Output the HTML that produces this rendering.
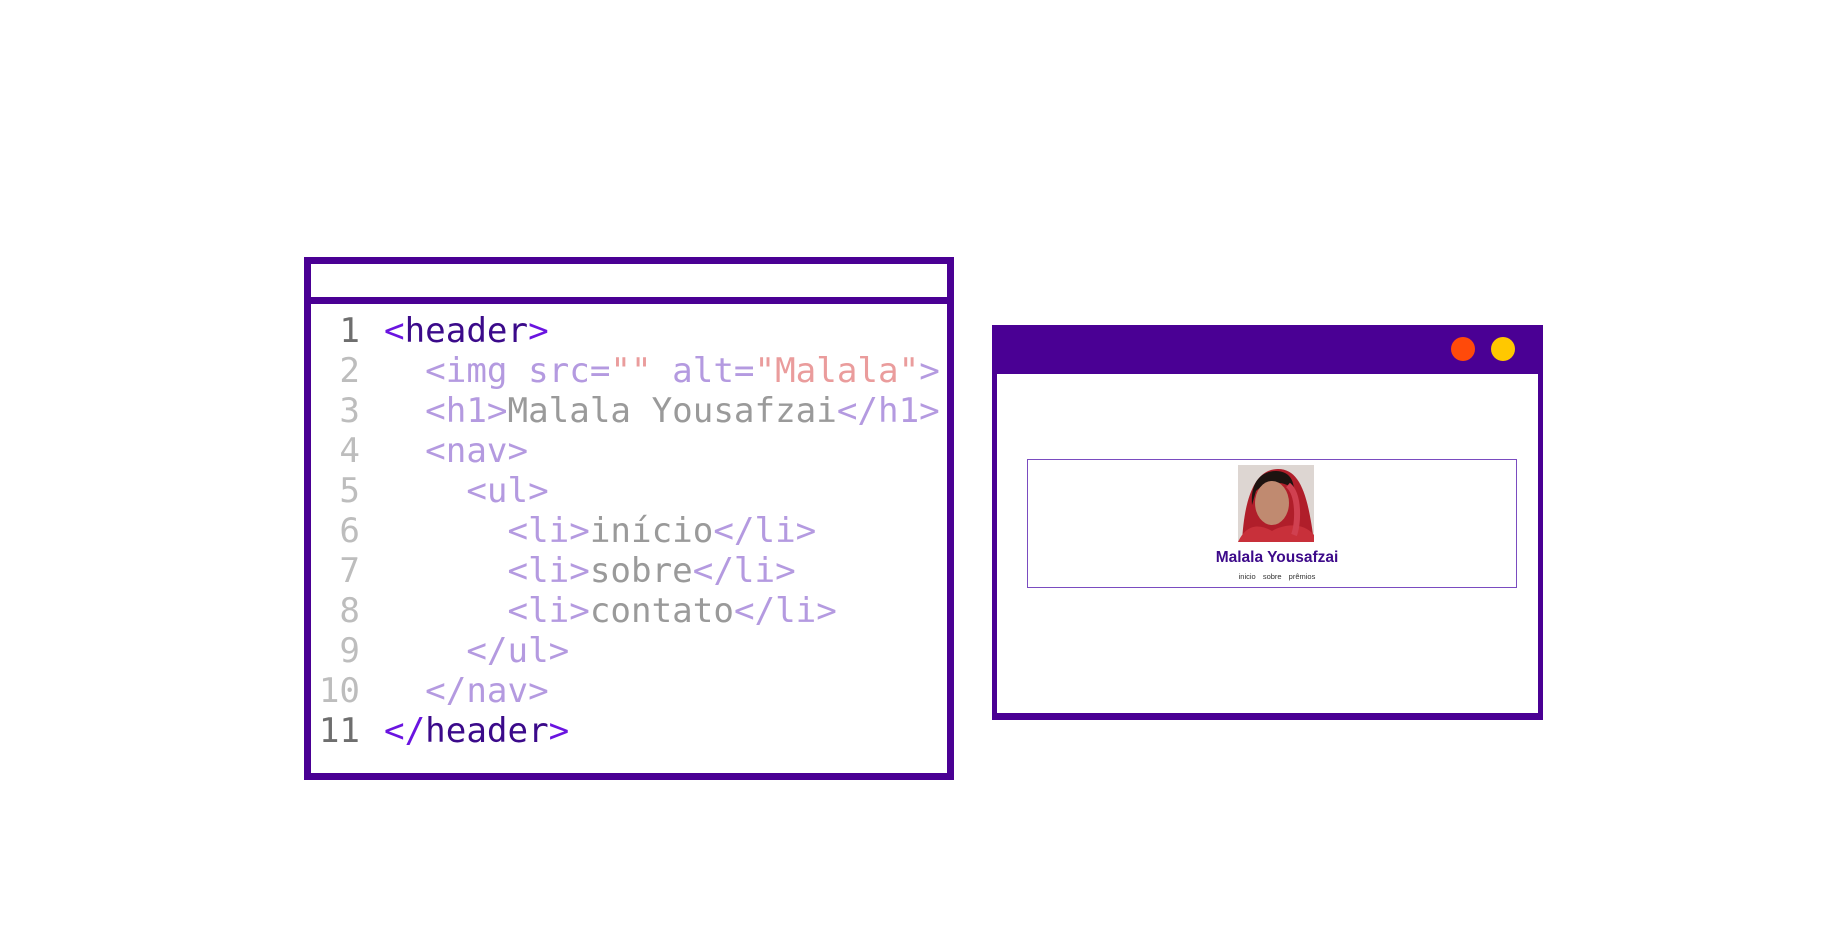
<!DOCTYPE html>
<html><head><meta charset="utf-8"><style>
html,body{margin:0;padding:0;background:#fff;width:1845px;height:943px;overflow:hidden;position:relative}
.code{position:absolute;left:304px;top:257px;width:636px;height:509px;border:7px solid #4a0094;}
.bar{position:absolute;left:0;top:0;width:100%;height:33px;border-bottom:7px solid #4a0094}
.lines{position:absolute;left:0;top:47px;font-family:"DejaVu Sans Mono","Liberation Mono",monospace;font-size:34.2px;line-height:40px;white-space:pre}
.n{display:inline-block;width:49px;text-align:right;color:#bdbdbd;margin-right:24px}
.n.d{color:#6e6e6e}
.p{color:#6a14e0}.h{color:#3b0a8a}.l{color:#b49ae0}.t{color:#9a9a9a}.v{color:#ea9c9c}
.prev{position:absolute;left:992px;top:325px;width:541px;height:388px;border:5px solid #4a0094;border-top:none;border-bottom:7px solid #4a0094}
.ph{position:absolute;left:-5px;top:0;width:551px;height:49px;background:#4a0094}
.dot{position:absolute;top:337px;width:24px;height:24px;border-radius:50%}
.card{position:absolute;left:1027px;top:459px;width:488px;height:127px;border:1.5px solid #7a4cc0}
.photo{position:absolute;left:1238px;top:465px;width:76px;height:77px;background:#ddd6d2;overflow:hidden}
.name{position:absolute;left:1030px;width:494px;top:549px;text-align:center;font:bold 15.5px "Liberation Sans",sans-serif;color:#3d0a8a}
.nav{position:absolute;left:1030px;width:494px;top:572px;text-align:center;font:7.5px "Liberation Sans",sans-serif;color:#333;word-spacing:5px}
</style></head><body>
<div class="code"><div class="bar"></div>
<div class="lines"><span class="n d">1</span><span class="p">&lt;</span><span class="h">header</span><span class="p">&gt;</span>
<span class="n">2</span>  <span class="l">&lt;img src=</span><span class="v">""</span><span class="l"> alt=</span><span class="v">"Malala"</span><span class="l">&gt;</span>
<span class="n">3</span>  <span class="l">&lt;h1&gt;</span><span class="t">Malala Yousafzai</span><span class="l">&lt;/h1&gt;</span>
<span class="n">4</span>  <span class="l">&lt;nav&gt;</span>
<span class="n">5</span>    <span class="l">&lt;ul&gt;</span>
<span class="n">6</span>      <span class="l">&lt;li&gt;</span><span class="t">início</span><span class="l">&lt;/li&gt;</span>
<span class="n">7</span>      <span class="l">&lt;li&gt;</span><span class="t">sobre</span><span class="l">&lt;/li&gt;</span>
<span class="n">8</span>      <span class="l">&lt;li&gt;</span><span class="t">contato</span><span class="l">&lt;/li&gt;</span>
<span class="n">9</span>    <span class="l">&lt;/ul&gt;</span>
<span class="n">10</span>  <span class="l">&lt;/nav&gt;</span>
<span class="n d">11</span><span class="p">&lt;/</span><span class="h">header</span><span class="p">&gt;</span></div>
</div>
<div class="prev"><div class="ph"></div></div>
<div class="dot" style="left:1451px;background:#ff4a0a"></div>
<div class="dot" style="left:1491px;background:#ffc800"></div>
<div class="card"></div>
<div class="photo"><svg width="76" height="77" viewBox="0 0 76 77">
<path d="M4 77 C6 40 14 4 40 4 C62 4 70 30 76 77Z" fill="#b01e2a"/>
<path d="M14 40 C12 14 26 6 38 6 C50 6 56 14 56 26 C50 16 30 14 18 26Z" fill="#1d1310"/>
<ellipse cx="34" cy="38" rx="17" ry="22" fill="#c08a70"/>
<path d="M0 77 C8 60 20 58 34 66 C48 58 66 58 76 70 L76 77Z" fill="#c8303a"/>
<path d="M50 20 C62 30 60 60 56 70" stroke="#d04050" stroke-width="6" fill="none"/>
</svg></div>
<div class="name">Malala Yousafzai</div>
<div class="nav">inicio sobre prêmios</div>
</body></html>
